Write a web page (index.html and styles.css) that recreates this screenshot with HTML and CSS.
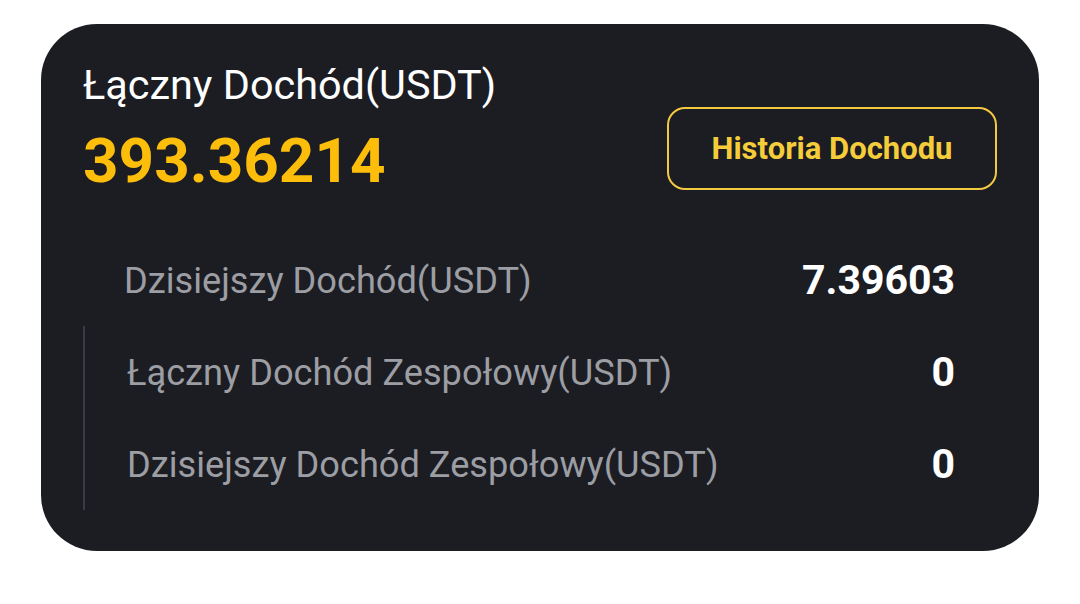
FILE: index.html
```html
<!DOCTYPE html>
<html lang="pl">
<head>
<meta charset="utf-8">
<link rel="stylesheet" href="styles.css">
</head>
<body>
<div class="card">
  <div class="top">
    <div class="total">
      <div class="title">Łączny Dochód(USDT)</div>
      <div class="amount">393.36214</div>
    </div>
    <button class="history">Historia Dochodu</button>
  </div>
  <div class="rows">
    <div class="row first">
      <span class="label">Dzisiejszy Dochód(USDT)</span>
      <span class="value">7.39603</span>
    </div>
    <div class="group">
      <div class="row">
        <span class="label">Łączny Dochód Zespołowy(USDT)</span>
        <span class="value">0</span>
      </div>
      <div class="row">
        <span class="label">Dzisiejszy Dochód Zespołowy(USDT)</span>
        <span class="value">0</span>
      </div>
    </div>
  </div>
</div>
</body>
</html>
```
FILE: styles.css
```css
html, body {
  margin: 0;
  padding: 0;
  background: #ffffff;
  font-family: Roboto, "Noto Sans", sans-serif;
}
body {
  padding: 24px 41px 0 41px;
}
.card {
  width: 998px;
  height: 527px;
  box-sizing: border-box;
  background: #1b1d23;
  border-radius: 56px;
  padding: 37px 84px 0 42px;
}
.top {
  display: flex;
  justify-content: space-between;
  align-items: flex-start;
}
.title {
  color: #ffffff;
  font-size: 41.4px;
  line-height: 48px;
}
.amount {
  color: #fcbd0b;
  font-size: 62px;
  font-weight: 700;
  line-height: 70px;
  margin-top: 17px;
}
.history {
  margin-top: 46px;
  margin-right: -42px;
  width: 330px;
  height: 83px;
  background: transparent;
  border: 2px solid #f3c93f;
  border-radius: 18px;
  color: #f5cc3a;
  font-family: Roboto, "Noto Sans", sans-serif;
  font-size: 31px;
  font-weight: 700;
  padding: 0;
}
.rows {
  margin-top: 38px;
}
.row {
  display: flex;
  justify-content: space-between;
  align-items: center;
  height: 92px;
  padding-left: 42px;
}
.row.first {
  padding-left: 41px;
}
.group {
  border-left: 2px solid #383b42;
}
.group .row {
  padding-left: 42px;
}
.label {
  color: #9c9ea3;
  font-size: 36.2px;
}
.value {
  color: #ffffff;
  font-size: 41px;
  font-weight: 700;
}
```
